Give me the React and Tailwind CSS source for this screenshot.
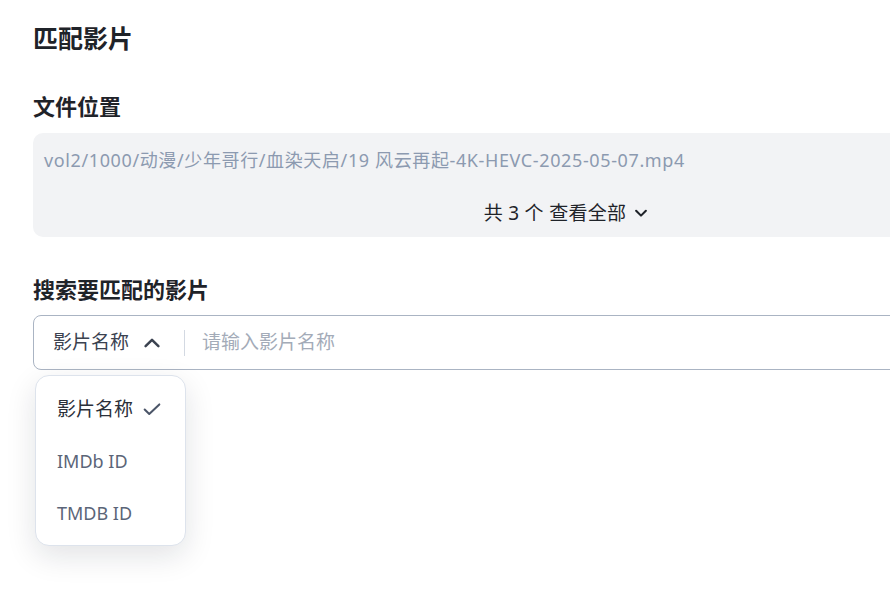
import React from "react";

const font = { fontFamily: '"Noto Sans", "Noto Sans CJK SC", sans-serif' };

export default function App() {
  return (
    <div className="w-[890px] h-[605px] overflow-hidden bg-white relative" style={font}>
      <div className="w-[1068px] pl-[33px] pt-[22px]">
        <h1 className="text-[25px] leading-[32px] font-bold text-[#1f2329]">匹配影片</h1>
        <h2 className="mt-[38px] text-[22px] leading-[28px] font-bold text-[#1f2329]">文件位置</h2>
        <div className="mt-[13px] w-[1068px] rounded-[10px] bg-[#f2f3f5] px-[11px] pt-[15px] pb-[12px]">
          <div className="text-[18px] leading-[24px] tracking-[0.62px] text-[#8c9ab0]">
            vol2/1000/动漫/少年哥行/血染天启/19 风云再起-4K-HEVC-2025-05-07.mp4
          </div>
          <div className="mt-[29px] flex items-center justify-center text-[19px] leading-[24px] text-[#1f2329]">
            <span className="tracking-[0.3px]">共 3 个 查看全部</span>
            <svg className="ml-[6px]" width="18" height="18" viewBox="0 0 24 24" fill="none" stroke="currentColor" strokeWidth="2.8" strokeLinecap="round" strokeLinejoin="round">
              <path d="M5.5 9l6.5 6.5 6.5-6.5" />
            </svg>
          </div>
        </div>
        <h2 className="mt-[38px] text-[22px] leading-[28px] font-bold text-[#1f2329]">搜索要匹配的影片</h2>
        <div className="relative mt-[12px]">
          <div className="flex h-[55px] w-[1068px] items-center rounded-[8px] border border-[#aab4c3] bg-white">
            <div className="flex items-center pl-[19px]">
              <span className="text-[19px] text-[#3b4250]">影片名称</span>
              <svg className="ml-[12px]" width="22" height="22" viewBox="0 0 24 24" fill="none" stroke="#3b4250" strokeWidth="2.7" strokeLinecap="round" strokeLinejoin="round">
                <path d="M5 15.5l7-7 7 7" />
              </svg>
            </div>
            <div className="ml-[21px] h-[26px] w-px bg-[#d3d9e2]" />
            <span className="ml-[17px] text-[19px] text-[#a3abb8]">请输入影片名称</span>
          </div>
          <div className="absolute left-[2px] top-[60px] w-[151px] rounded-[14px] border border-[#dde3ec] bg-white pt-[7px] pb-[6px] shadow-[0_10px_30px_rgba(15,23,42,0.12)]">
            <div className="flex h-[52px] items-center pl-[21px] text-[19px] text-[#2b303a]">
              <span>影片名称</span>
              <svg className="ml-[8px]" width="22" height="22" viewBox="0 0 24 24" fill="none" stroke="#4b5568" strokeWidth="2.2" strokeLinecap="round" strokeLinejoin="round">
                <path d="M4 12.5l5 5L20 7" />
              </svg>
            </div>
            <div className="flex h-[52px] items-center pl-[21px] text-[18px] text-[#5b6578]">IMDb ID</div>
            <div className="flex h-[52px] items-center pl-[21px] text-[18px] text-[#5b6578]">TMDB ID</div>
          </div>
        </div>
      </div>
    </div>
  );
}
